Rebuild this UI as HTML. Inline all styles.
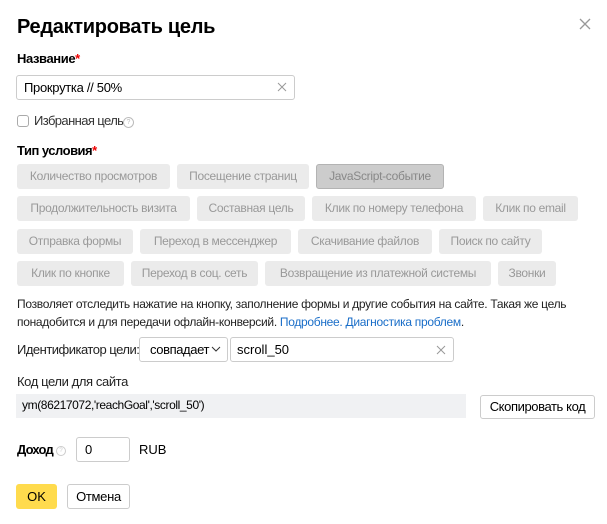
<html><head><style>
body{margin:0;width:607px;height:524px;background:#fff;font-family:"Liberation Sans",sans-serif;color:#000;position:relative;overflow:hidden}
.a{position:absolute;white-space:nowrap}
.c{position:absolute;height:25px;line-height:25px;background:#ebebeb;color:#999;font-size:12px;text-align:center;border-radius:3px;letter-spacing:-0.3px}
.b{position:absolute;border:1px solid #ccc;box-sizing:border-box;border-radius:3px;background:#fff;font-size:13px}
</style></head><body>
<div class="a" style="left:17px;top:16px;font-size:20px;font-weight:bold;letter-spacing:-0.3px">Редактировать цель</div>
<svg class="a" style="left:579px;top:18px" width="12" height="12"><path d="M1 1L11 11M11 1L1 11" stroke="#999" stroke-width="1.3"/></svg>
<div class="a" style="left:17px;top:51px;font-size:13px;font-weight:bold;letter-spacing:-0.4px">Название<span style="color:#e00">*</span></div>
<div class="b" style="left:16px;top:75px;width:279px;height:25px;line-height:23px;padding-left:7px;letter-spacing:-0.3px">Прокрутка // 50%</div>
<svg class="a" style="left:277px;top:82px" width="10" height="10"><path d="M1 1L9 9M9 1L1 9" stroke="#999"/></svg>
<div class="b" style="left:17px;top:115px;width:12px;height:12px;border-color:#aaa"></div>
<div class="a" style="left:34px;top:113px;font-size:13px;color:#333;letter-spacing:-0.6px">Избранная цель</div>
<div class="a" style="left:123px;top:117px;width:9px;height:9px;border:1px solid #bbb;border-radius:50%;font-size:7px;color:#bbb;text-align:center;line-height:9px">?</div>
<div class="a" style="left:17px;top:143px;font-size:13px;font-weight:bold;letter-spacing:-0.5px">Тип условия<span style="color:#e00">*</span></div>
<div class="c" style="left:17px;top:164px;width:153px">Количество просмотров</div>
<div class="c" style="left:177px;top:164px;width:132px">Посещение страниц</div>
<div class="c" style="left:316px;top:164px;width:128px;background:#ccc;border:1px solid #b3b3b3;box-sizing:border-box;line-height:23px;color:#888">JavaScript-событие</div>
<div class="c" style="left:17px;top:196px;width:173px">Продолжительность визита</div>
<div class="c" style="left:197px;top:196px;width:108px">Составная цель</div>
<div class="c" style="left:312px;top:196px;width:164px">Клик по номеру телефона</div>
<div class="c" style="left:483px;top:196px;width:95px">Клик по email</div>
<div class="c" style="left:17px;top:229px;width:116px">Отправка формы</div>
<div class="c" style="left:140px;top:229px;width:151px">Переход в мессенджер</div>
<div class="c" style="left:298px;top:229px;width:134px">Скачивание файлов</div>
<div class="c" style="left:439px;top:229px;width:103px">Поиск по сайту</div>
<div class="c" style="left:17px;top:261px;width:107px">Клик по кнопке</div>
<div class="c" style="left:131px;top:261px;width:127px">Переход в соц. сеть</div>
<div class="c" style="left:265px;top:261px;width:226px">Возвращение из платежной системы</div>
<div class="c" style="left:498px;top:261px;width:58px">Звонки</div>
<div class="a" style="left:17px;top:295px;font-size:12px;line-height:18px;color:#222;letter-spacing:-0.3px">Позволяет отследить нажатие на кнопку, заполнение формы и другие события на сайте. Такая же цель<br>понадобится и для передачи офлайн-конверсий. <span style="color:#1a6ec8">Подробнее. Диагностика проблем</span>.</div>
<div class="a" style="left:17px;top:342px;font-size:13px;color:#222;letter-spacing:-0.5px">Идентификатор цели:</div>
<div class="b" style="left:139px;top:337px;width:89px;height:25px;line-height:23px;padding-left:10px;letter-spacing:-0.4px">совпадает</div>
<svg class="a" style="left:211px;top:346px" width="10" height="7"><path d="M1 1L5 5L9 1" stroke="#333" fill="none"/></svg>
<div class="b" style="left:230px;top:337px;width:224px;height:25px;line-height:23px;padding-left:6px">scroll_50</div>
<svg class="a" style="left:436px;top:345px" width="10" height="10"><path d="M1 1L9 9M9 1L1 9" stroke="#999"/></svg>
<div class="a" style="left:17px;top:374px;font-size:13px;color:#222;letter-spacing:-0.4px">Код цели для сайта</div>
<div class="a" style="left:16px;top:394px;width:450px;height:24px;background:#f0f1f3;font-size:12px;line-height:22px;padding-left:6px;box-sizing:border-box;letter-spacing:-0.4px">ym(86217072,'reachGoal','scroll_50')</div>
<div class="b" style="left:480px;top:395px;width:115px;height:24px;line-height:22px;text-align:center;letter-spacing:-0.4px">Скопировать код</div>
<div class="a" style="left:17px;top:442px;font-size:13px;font-weight:bold;letter-spacing:-0.8px">Доход</div>
<div class="a" style="left:56px;top:446px;width:8px;height:8px;border:1px solid #ccc;border-radius:50%;font-size:6px;color:#ccc;text-align:center;line-height:8px">?</div>
<div class="b" style="left:76px;top:437px;width:54px;height:25px;line-height:23px;padding-left:8px">0</div>
<div class="a" style="left:139px;top:442px;font-size:13px">RUB</div>
<div class="a" style="left:16px;top:484px;width:41px;height:25px;background:#ffdb4d;border-radius:3px;font-size:13px;line-height:25px;text-align:center">OK</div>
<div class="b" style="left:67px;top:484px;width:63px;height:25px;line-height:23px;text-align:center;letter-spacing:-0.3px">Отмена</div>
</body></html>
